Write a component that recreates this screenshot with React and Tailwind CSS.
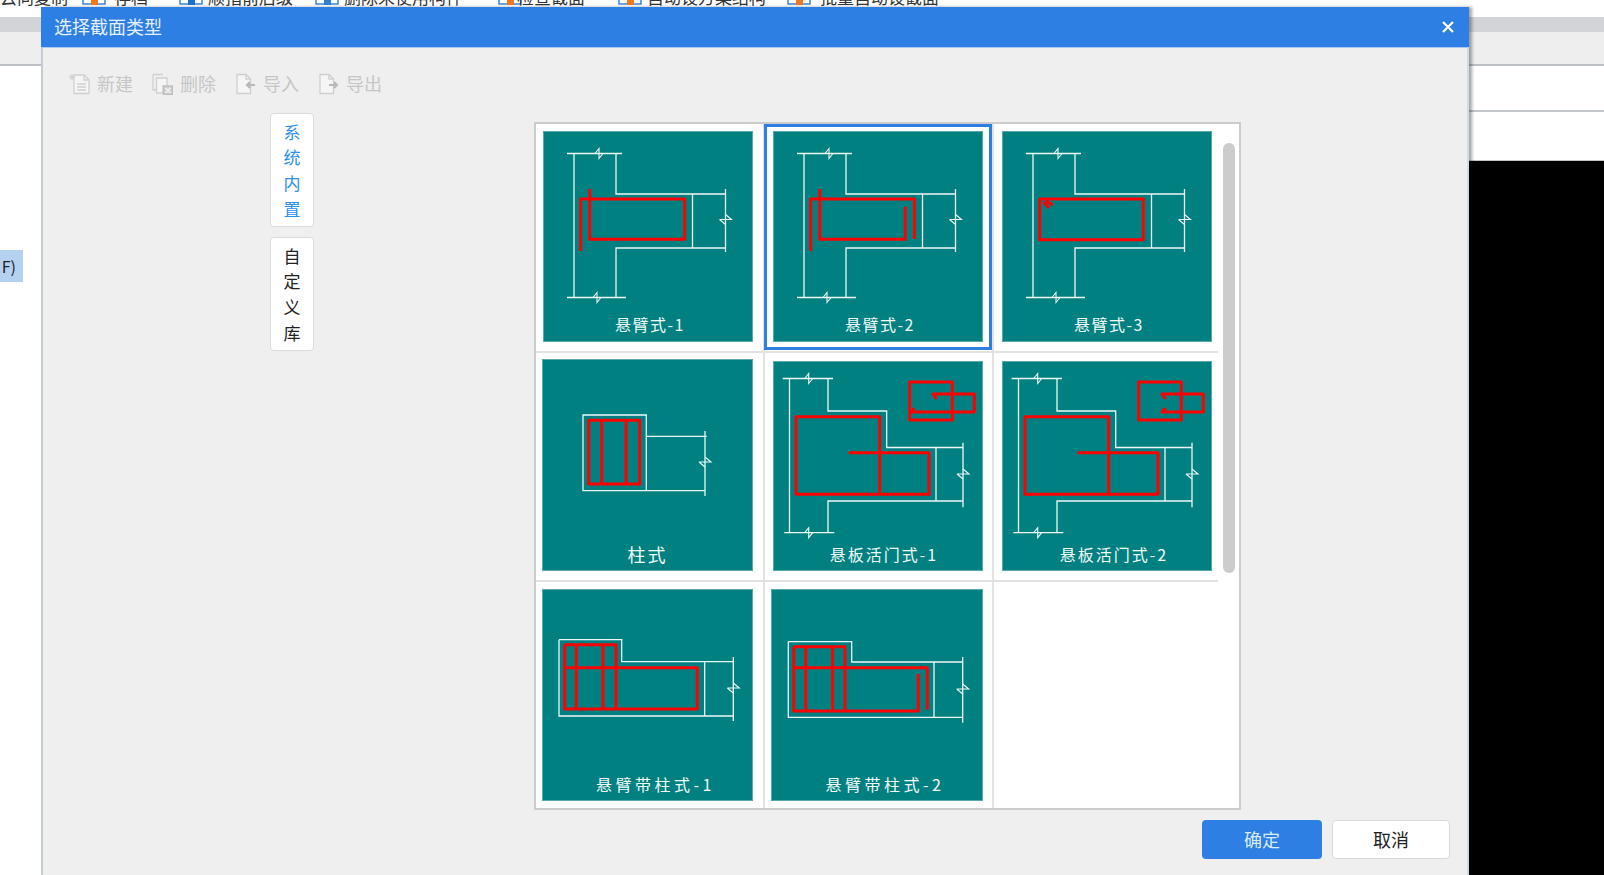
import React from "react";

const column = "M31 22V166M73 22V63H183M73 166V117H183";
const t1White = `M24 22.5H79 ${column} M24 166.5H83 M149.5 63V117 M182.5 58V121`;
const door = "M9.7 17.5H60 M16.5 17.5V171.7 M55 17.5V50H113.7V86.5H190 M190 81.7V146.3 M55 171.7V140H190 M11.3 171.7H61.3 M163 86.5V140";
const doorRed = "M23 55.7H106.7V133.3H23Z M106.7 55.7V133.3 M75.7 91.7H156V133.3H106.7";

const tiles = [
  {
    label: "悬臂式-1", box: "ml-[7px] mt-[7px] w-[210px] h-[211px]", text: "pl-[4px] tracking-[1.5px]",
    white: t1White, red: "M37.7 120V68H141.7V108.3H46.7V58",
    h: [[56, 22.5], [54, 166.5]], v: [[182.5, 88.5]],
  },
  {
    label: "悬臂式-2", selected: true, box: "ml-[6px] mt-[4px] w-[210px] h-[211px]", text: "pl-[4px] tracking-[1.5px]",
    white: t1White, red: "M37.7 120V68H141.5V108 M132.3 75.7V108.3H46.7V58",
    h: [[56, 22.5], [54, 166.5]], v: [[182.5, 88.5]],
  },
  {
    label: "悬臂式-3", box: "ml-[8px] mt-[7px] w-[210px] h-[211px]", text: "pl-[4px] tracking-[1.5px]",
    white: t1White, red: "M37.7 68H141.3V108.7H37.7Z M41.5 71L47 77 M44 70L51 74",
    h: [[56, 22.5], [54, 166.5]], v: [[182.5, 88.5]],
  },
  {
    label: "柱式", box: "ml-[6px] mt-[6px] w-[211px] h-[212px]", text: "pt-[2px] text-[18px] tracking-[2px]",
    white: "M41 56H104.3V131.7H41Z M104.3 77.3H164.7 M104.3 131.7H163 M163 72V137",
    red: "M46.7 61.3H97.7V125H46.7Z M59.7 61.3V125 M84 61.3V125",
    h: [], v: [[163, 103]],
  },
  {
    label: "悬板活门式-1", box: "ml-[8px] mt-[8px] w-[210px] h-[210px]", text: "pl-[12px] tracking-[2px]",
    white: door, red: `${doorRed} M136.7 21H179.3V59H136.7Z M163.5 38L160 33H201.3V51H137.3 M139 51L141 47`,
    h: [[35.7, 17.5], [35.7, 171.7]], v: [[190, 113]],
  },
  {
    label: "悬板活门式-2", box: "ml-[8px] mt-[8px] w-[210px] h-[210px]", text: "pl-[14px] tracking-[2px]",
    white: door, red: `${doorRed} M136.7 21H179.3V59H136.7Z M163.5 38L160 33H201.3V51H160L163.5 47`,
    h: [[35.7, 17.5], [35.7, 171.7]], v: [[190, 113]],
  },
  {
    label: "悬臂带柱式-1", box: "ml-[6px] mt-[7px] w-[211px] h-[212px]", text: "pt-[2px] pl-[16px] tracking-[3.5px]",
    white: "M17 50.7H79.7V72.7H191.3 M17 50.7V127H191.3 M191.3 68V132 M162.7 72.7V127",
    red: "M22.7 55.7H74V120 M22.7 55.7V120H155.3V78.7H22.7 M34.3 55.7V120 M61 55.7V120",
    h: [], v: [[191.3, 99]],
  },
  {
    label: "悬臂带柱式-2", box: "ml-[6px] mt-[7px] w-[212px] h-[212px]", text: "pt-[2px] pl-[16px] tracking-[3.5px]",
    white: "M17.3 52.7H80.7V73H191.7 M17.3 52.7V128.3H191.7 M191.7 68V133.7 M163 73V128.3",
    red: "M22.7 57.7H74V122 M22.7 78.7H156.3V120.7 M147.3 84.7V122H22.7V57.7 M34.7 57.7V122 M61.7 57.7V122",
    h: [], v: [[191.7, 100]],
  },
];

const cellBorders = [
  "border-r-2 border-b-2", "border-r-2 border-b-2", "border-b-2",
  "border-r-2 border-b-2", "border-r-2 border-b-2", "border-b-2",
  "border-r-2", "border-r-2", "",
];

function Drawing({ tile }) {
  const marks =
    tile.h.map(([x, y]) => `M${x - 4} ${y}L${x} ${y - 5}V${y + 5}L${x + 4} ${y}`).join(" ") +
    " " +
    tile.v.map(([x, y]) => `M${x - 6} ${y}H${x + 6}L${x} ${y - 5} M${x} ${y + 5}L${x - 6} ${y}`).join(" ");
  return (
    <svg viewBox="1 1 208 178" className="block w-[208px] h-[178px]" fill="none">
      <path d={tile.white} stroke="#eef7f7" strokeWidth="1.3" />
      <path d={marks} stroke="#eef7f7" strokeWidth="1.1" />
      <path d={tile.red} stroke="#ff0000" strokeWidth="3" strokeLinejoin="round" />
    </svg>
  );
}

function Tile({ tile }) {
  return (
    <div className={`${tile.box} bg-[#008080] border border-[#58aaaa]`}>
      <Drawing tile={tile} />
      <div className={`${tile.text} text-center text-[16px] leading-[28px] text-[#f2fafa]`}>{tile.label}</div>
    </div>
  );
}

function PageIcon({ arrow }) {
  return (
    <svg width="21" height="22" viewBox="0 0 21 22" fill="none" stroke="#cfcfcf" strokeWidth="1.3">
      <path d="M2 1.5H11L15.5 6V20.5H2Z" fill="#f5f5f5" />
      <path d="M11 1.5V6H15.5" />
      <path d={arrow} stroke="#b8b8b8" strokeWidth="2" />
    </svg>
  );
}

function NewIcon() {
  return (
    <svg width="21" height="22" viewBox="0 0 21 22" fill="none" stroke="#cfcfcf" strokeWidth="1.3">
      <path d="M5 2H15L20 7V20.5H5Z" fill="#f5f5f5" />
      <path d="M15 2V7H20 M8 11H17 M8 14H17 M8 17H17" />
      <path d="M3 1V7 M0 4H6 M1 2L5 6 M5 2L1 6" strokeWidth="1" />
    </svg>
  );
}

function DeleteIcon() {
  return (
    <svg width="21" height="22" viewBox="0 0 21 22" fill="none" stroke="#cfcfcf" strokeWidth="1.3">
      <path d="M1 1.5H11 M1 1.5V17H4" />
      <path d="M4.5 5H15V13H11V20H4.5Z" fill="#f5f5f5" />
      <rect x="11.5" y="13" width="9" height="8.5" fill="#d0d0d0" stroke="#bdbdbd" />
      <path d="M13.5 15L18.5 20 M18.5 15L13.5 20" stroke="#f5f5f5" strokeWidth="1.2" />
    </svg>
  );
}

function TopIcon({ tone }) {
  return (
    <svg width="24" height="7" viewBox="0 0 24 7" fill="none" className="block">
      <rect x="1" y="-8" width="22" height="13" fill="#fff" stroke="#2f7fd8" strokeWidth="1.4" />
      <rect x="9" y="-2" width="7" height="8" fill={tone} />
    </svg>
  );
}

const topItems = [
  { text: "存档", tone: "#f27a1a", icon: "ml-[15px]", label: "ml-[8px] w-[35px]" },
  { text: "顺指前后级", tone: "#1d6fd0", icon: "ml-[30px]", label: "ml-[5px] w-[90px]" },
  { text: "删除未使用构件", tone: "#2f7fd8", icon: "ml-[17px]", label: "ml-[5px] w-[124px]" },
  { text: "检查截面", tone: "#f27a1a", icon: "ml-[30px]", label: "ml-[-5px] w-[82px]" },
  { text: "自动设方案结构", tone: "#f27a1a", icon: "ml-[19px]", label: "ml-[5px] w-[122px]" },
  { text: "批量自动设截面", tone: "#f27a1a", icon: "ml-[18px]", label: "ml-[9px] w-[126px]" },
];

export default function App() {
  return (
    <div className="relative w-[1604px] h-[875px] overflow-hidden bg-white flex flex-col font-['Noto_Sans_CJK_SC','Noto_Sans',sans-serif]">
      {/* window behind the dialog */}
      <div className="h-[17px] shrink-0 overflow-hidden">
        <div className="flex items-end h-[6px] text-[17px] leading-[18px] text-[#333]">
          <span className="w-[67px] shrink-0 whitespace-nowrap">云向复制</span>
          {topItems.map((item) => (
            <div key={item.text} className="flex items-end shrink-0">
              <span className={item.icon}>
                <TopIcon tone={item.tone} />
              </span>
              <span className={`${item.label} shrink-0 whitespace-nowrap`}>{item.text}</span>
            </div>
          ))}
        </div>
      </div>
      <div className="h-[15px] shrink-0 bg-[#d2d4d8]" />
      <div className="h-[34px] shrink-0 bg-[#eeeeee] border-b-2 border-[#bcbfc3]" />
      <div className="flex-1 flex min-h-0">
        <div className="w-[1469px] pt-[184px]">
          <div className="w-[23px] h-[32px] bg-[#b5d1f2] flex items-center justify-end pr-[7px] text-[16px] text-[#222] overflow-hidden">
            <span className="whitespace-nowrap">F)</span>
          </div>
        </div>
        <div className="flex-1 flex flex-col">
          <div className="h-[46px] bg-white border-b-2 border-[#c2c6ca]" />
          <div className="h-[49px] bg-white border-b border-[#c2c6ca]" />
          <div className="flex-1 bg-black" />
        </div>
      </div>

      {/* dialog */}
      <div className="absolute left-[41px] top-[7px] w-[1428px] h-[868px] flex flex-col bg-[#efefef] shadow-[3px_0_3px_rgba(0,0,0,0.35)]">
        <div className="h-[40px] shrink-0 bg-[#2d7fe3] flex items-center justify-between pl-[13px] pr-[15px]">
          <span className="text-[18px] leading-[24px] pb-[2px] text-[#e6f0fb]">选择截面类型</span>
          <svg width="12" height="12" viewBox="0 0 12 12" stroke="#ffffff" strokeWidth="2.2" fill="none">
            <path d="M1 1L11 11M11 1L1 11" />
          </svg>
        </div>
        <div className="flex-1 min-h-0 border-l-2 border-r-2 border-t border-l-[#c3cbd6] border-r-[#d2dae4] border-t-[#a9c9f0]">
          <div className="h-[65px] flex items-start gap-[19px] pl-[26px] pt-[25px] text-[18px] leading-[20px] text-[#c6c6c6]">
            <div className="flex items-center gap-[7px]"><NewIcon /><span className="pb-[2px]">新建</span></div>
            <div className="flex items-center gap-[7px]"><DeleteIcon /><span className="pb-[2px]">删除</span></div>
            <div className="flex items-center gap-[7px]"><PageIcon arrow="M20 12H12 M15 9L12 12L15 15" /><span className="pb-[2px]">导入</span></div>
            <div className="flex items-center gap-[7px]"><PageIcon arrow="M11 12H19 M16 9L19 12L16 15" /><span className="pb-[2px]">导出</span></div>
          </div>
          <div className="flex pl-[227px]">
            <div className="w-[44px] flex flex-col gap-[10px]">
              <div className="h-[114px] bg-white border border-[#dcdcdc] rounded-[4px] flex flex-col items-center justify-center text-[17px] leading-[25.6px] text-[#2d8fe8]">
                <span>系</span><span>统</span><span>内</span><span>置</span>
              </div>
              <div className="h-[114px] bg-white border border-[#dcdcdc] rounded-[4px] flex flex-col items-center justify-center text-[17px] leading-[25.6px] text-[#222]">
                <span>自</span><span>定</span><span>义</span><span>库</span>
              </div>
            </div>
            <div className="ml-[220px] mt-[9px] w-[916px]">
              <div className="w-[707px] h-[688px] bg-white border-2 border-[#cccccc] flex">
                <div className="grid grid-cols-[229px_229px_224px] grid-rows-[229px_229px_226px] w-[682px]">
                  {tiles.map((tile, i) => (
                    <div key={tile.label} className={`${cellBorders[i]} border-[#e2e2e2] overflow-visible`}>
                      {tile.selected ? (
                        <div className="-ml-px w-[228px] h-[226px] border-[3px] border-[#2d7fe3] overflow-hidden">
                          <Tile tile={tile} />
                        </div>
                      ) : (
                        <div className="overflow-hidden h-full pt-px -mt-px">
                          <Tile tile={tile} />
                        </div>
                      )}
                    </div>
                  ))}
                </div>
                <div className="pl-[5px] pt-[19px]">
                  <div className="w-[12px] h-[430px] rounded-[6px] bg-[#cccccc]" />
                </div>
              </div>
              <div className="mt-[10px] flex justify-end gap-[10px] text-[18px]">
                <div className="w-[120px] h-[39px] rounded-[4px] bg-[#2d7fe3] text-[#dcebfb] flex items-center justify-center">确定</div>
                <div className="w-[118px] h-[39px] rounded-[4px] bg-white border border-[#d8d8d8] text-[#222] flex items-center justify-center">取消</div>
              </div>
            </div>
          </div>
        </div>
      </div>
    </div>
  );
}
